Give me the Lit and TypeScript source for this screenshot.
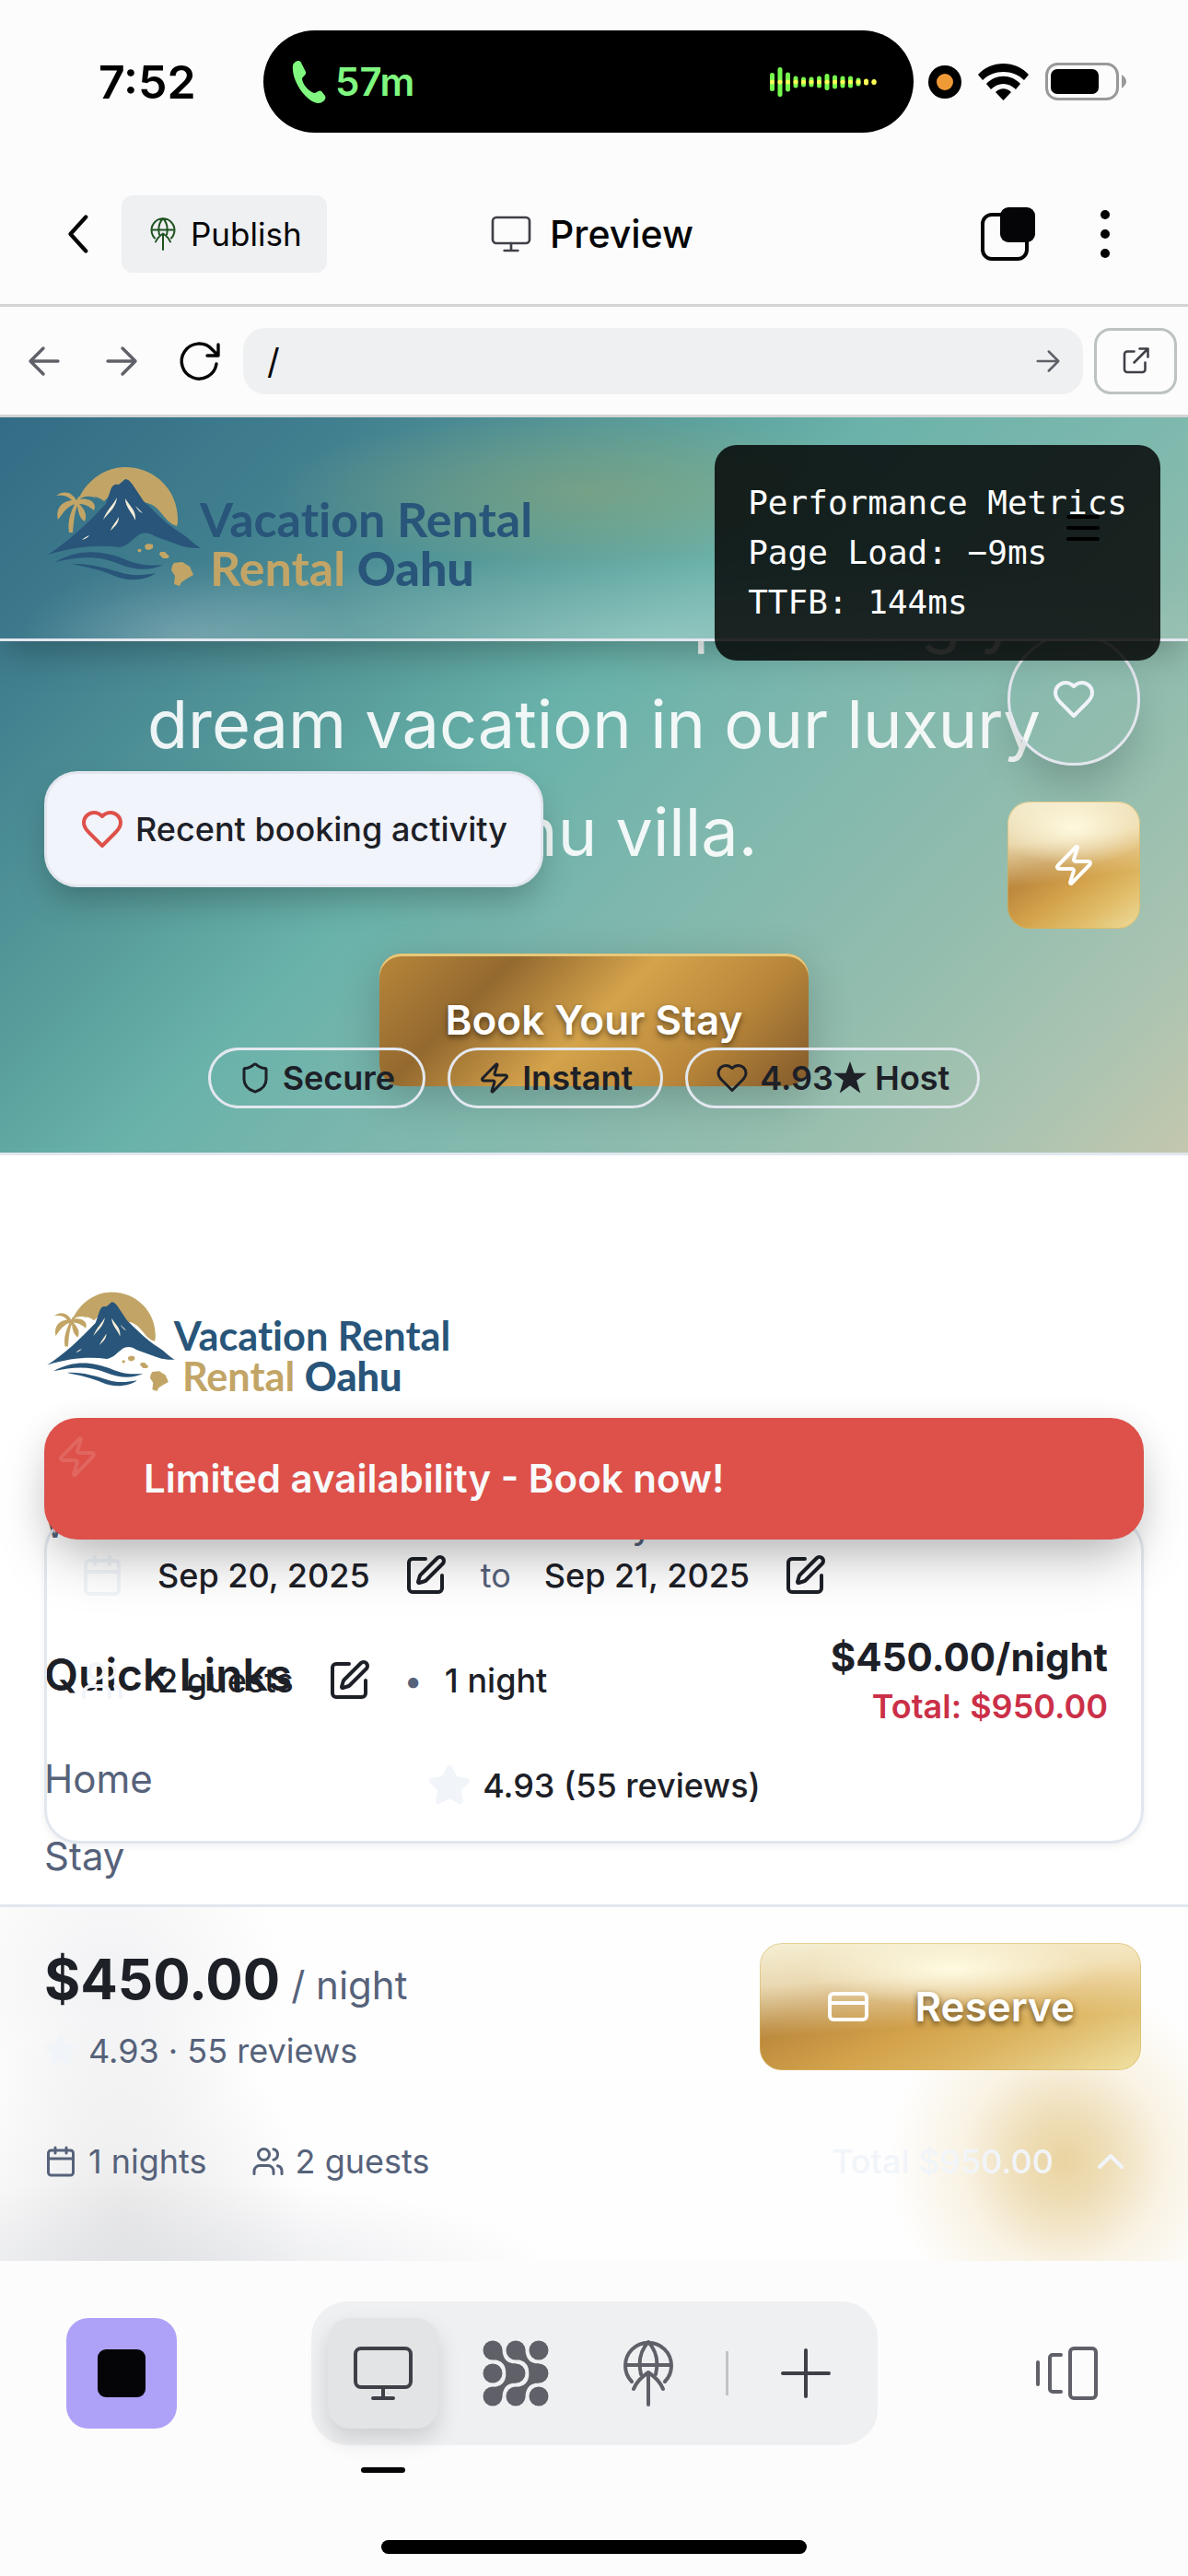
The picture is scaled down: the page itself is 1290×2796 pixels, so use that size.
import { LitElement, html, css, svg } from "lit";
import { customElement, property } from "lit/decorators.js";

const heart = svg`<path d="M19 14c1.49-1.46 3-3.21 3-5.5A5.5 5.5 0 0 0 16.5 3c-1.76 0-3 .5-4.5 2-1.5-1.5-2.740-2-4.500-2A5.500 5.500 0 0 0 2 8.500c0 2.300 1.500 4.050 3 5.500l7 7Z"/>`;
const bolt = svg`<path d="M4 14a1 1 0 0 1-.78-1.630l9.900-10.200a.5.5 0 0 1 .86.46l-1.920 6.020A1 1 0 0 0 13 10h7a1 1 0 0 1 .78 1.630l-9.900 10.200a.5.5 0 0 1-.86-.46l1.920-6.020A1 1 0 0 0 11 14z"/>`;
const shield = svg`<path d="M20 13c0 5-3.500 7.500-7.660 8.950a1 1 0 0 1-.67-.01C7.500 20.500 4 18 4 13V6a1 1 0 0 1 1-1c2 0 4.500-1.200 6.240-2.720a1.170 1.170 0 0 1 1.520 0C14.510 3.810 17 5 19 5a1 1 0 0 1 1 1z"/>`;
const calendar = svg`<path d="M8 2v4M16 2v4M3 10h18"/><rect x="3" y="4" width="18" height="18" rx="2"/>`;
const users = svg`<path d="M16 21v-2a4 4 0 0 0-4-4H6a4 4 0 0 0-4 4v2"/><circle cx="9" cy="7" r="4"/><path d="M22 21v-2a4 4 0 0 0-3-3.870M16 3.130a4 4 0 0 1 0 7.750"/>`;
const star = svg`<path fill="currentColor" d="M11.525 2.295a.53.53 0 0 1 .95 0l2.310 4.679a2.123 2.123 0 0 0 1.595 1.160l5.166.756a.53.53 0 0 1 .294.904l-3.736 3.638a2.123 2.123 0 0 0-.611 1.878l.882 5.140a.53.53 0 0 1-.771.560l-4.618-2.428a2.122 2.122 0 0 0-1.973 0L6.396 21.010a.53.53 0 0 1-.770-.560l.881-5.139a2.122 2.122 0 0 0-.611-1.879L2.160 9.795a.53.53 0 0 1 .294-.906l5.165-.755a2.122 2.122 0 0 0 1.597-1.160z"/>`;
const edit = svg`<path d="M12 3H5a2 2 0 0 0-2 2v14a2 2 0 0 0 2 2h14a2 2 0 0 0 2-2v-7"/><path d="M18.375 2.625a1 1 0 0 1 3 3l-9.013 9.014a2 2 0 0 1-.853.505l-2.873.840a.5.5 0 0 1-.620-.620l.840-2.873a2 2 0 0 1 .506-.852z"/>`;
const creditCard = svg`<rect x="2" y="5" width="20" height="14" rx="2"/><path d="M2 10h20"/>`;
const chevronUp = svg`<path d="m6 15 6-6 6 6"/>`;
const chevronLeft = svg`<path d="M15.700 4.600 9 12l6.700 7.400"/>`;
const menu = svg`<path d="M4 6h16M4 12h16M4 18h16"/>`;
const arrowLeft = svg`<path d="M19.500 12h-15M11.500 5l-7 7 7 7"/>`;
const arrowRight = svg`<path d="M4.500 12h15M12.500 5l7 7-7 7"/>`;
const reload = svg`<path d="M21.500 13.500a9.500 9.500 0 1 1-2.500-8l3 3M22.500 3v6h-6"/>`;
const external = svg`<path d="M11 5H6a2 2 0 0 0-2 2v11a2 2 0 0 0 2 2h11a2 2 0 0 0 2-2v-5M15 3h6v6M21 3 11 13"/>`;

const monitor = svg`<rect x="6" y="9" width="60" height="42" rx="6"/><path d="M36 51v11M25 63h22"/>`;
const globe = svg`<path d="M18 45A25 25 0 1 1 54 45M11 27h50M28 37Q23 16 36 2Q49 16 44 37M36 37v33M20 53Q24 43 36 35Q48 43 52 53"/>`;

const icon = (body: unknown, cls = "i48") => html`<svg class="icon ${cls}" viewBox="0 0 24 24" aria-hidden="true">${body}</svg>`;
const wide = (body: unknown, cls = "i48") => html`<svg class="icon ${cls}" viewBox="0 0 72 72" aria-hidden="true">${body}</svg>`;

const shared = css`
  * { box-sizing: border-box; margin: 0; padding: 0; }
  button { font: inherit; color: inherit; background: none; border: 0; display: flex; align-items: center; justify-content: center; cursor: pointer; }
  a { color: inherit; text-decoration: none; }
  svg { display: block; flex: none; }
  .icon { fill: none; stroke: currentColor; stroke-width: 2; stroke-linecap: round; stroke-linejoin: round; }
  .i36 { width: 36px; height: 36px; }
  .i48 { width: 48px; height: 48px; }
  .i60 { width: 60px; height: 60px; }
  .i72 { width: 72px; height: 72px; }
`;

@customElement("brand-logo")
class BrandLogo extends LitElement {
  @property({ reflect: true }) size = "large";
  static styles = css`
    :host { display: block; width: 532px; }
    :host([size="small"]) { width: 443px; }
    svg { display: block; width: 100%; height: auto; overflow: visible; }
    .gold { fill: #c2a566; }
    .blue { fill: #285579; }
    .snow { fill: #f4ecd9; }
    text { font: 700 52px Lato, "Open Sans", sans-serif; font-variant-ligatures: none; }
  `;
  render() {
    return html`<svg viewBox="8 3 532 150" role="img" aria-label="Vacation Rental Oahu">
      <path class="gold" d="M44 50C52 28 73 12 96 12c33 0 57 26 57 56 0 3 0 6-1 8-7-2-11-7-16-13-7-9-12-12-22-13L96 26 73 49c-6-5-14-7-28-5z"/>
      <path class="gold" d="M43 48c-4-8-13-12-22-5 7-1 13 0 17 5-10 1-18 8-15 21 5-6 8-13 18-17-4 9-8 18-6 31h4c1-12 2-22 5-29 1 8 3 14 8 17 3-7 0-13-6-19 7 0 11 3 16 7 4-8-5-14-16-12 4-3 11-5 19-1-6-6-18-6-22 2z"/>
      <path class="blue" d="M12 107C34 93 54 74 75 52l5-15c2-5 4-7 9-6l7-6c3 0 5 2 8 6l12 18c12 11 23 24 41 35 8 5 14 12 21 16-11 0-18-1-25-4l-25-9c-5-4-13-5-18-1-7 5-12 12-20 13-25-3-48-1-78 8z"/>
      <path class="snow" d="M87 45c-1 10-7 15-15 24 5-12 11-16 15-24zM96 46c5 9 12 12 11 24-4-10-11-14-11-24zM89 66c0 7-4 10-9 15 2-6 6-9 9-15zM107 54l8 8c-3-1-6-4-8-8zM57 86c-2 3-5 4-8 5 2-2 5-4 8-5z"/>
      <path class="blue" d="M20 115c28-16 53-11 73-4 14 6 25 9 44 7-14 7-31 6-48-1-22-9-42-8-69-2zM38 117c20-1 38 5 52 9 12 4 23 4 39 1-12 9-32 9-45 3-16-7-28-9-46-13z"/>
      <path class="gold" d="M117 97l4-2 5 1v4l-4 2-4-1zM110 101a2 2 0 1 0 3 0zM134 104l5 0 5 5-2 2-5 0-4-4zM149 116l9-1 8 5 4 9-7 4-6 4-2 4-6-2 1-9-4-6 1-5z"/>
      <text class="blue" x="177" y="88">Vacation Rental</text>
      <text class="gold" x="188" y="141">Rental <tspan class="blue" font-weight="900">Oahu</tspan></text>
    </svg>`;
  }
}

@customElement("device-status")
class DeviceStatus extends LitElement {
  static styles = [shared, css`
    :host { display: grid; grid-template-columns: 286px 1fr 298px; align-items: center; padding: 33px 0 34px; }
    .time { padding-left: 107px; font: 600 50px/60px Inter, sans-serif; color: #000; }
    .island { height: 111px; border-radius: 56px; background: #000; display: flex; align-items: center; padding: 0 38px 0 28px; gap: 2px; color: #80f880; font: 600 42px/48px Inter, sans-serif; }
    .wave { margin-left: auto; }
    .right { display: flex; align-items: center; gap: 18px; padding-left: 16px; }
  `];
  render() {
    const bars = [20, 32, 21, 13, 11, 11, 13, 18, 15, 13, 13, 9, 7, 6];
    return html`
      <div class="time">7:52</div>
      <div class="island">
        <svg class="i48" viewBox="0 0 48 48"><path fill="currentColor" d="M4 6c1-4 7-7 9-3l5 10c1 3-3 5-4 7 0 6 7 14 13 16 3 0 5-4 8-2l4 5c2 4-3 8-7 8C20 47 2 24 4 6z"/></svg>
        <span>57m</span>
        <svg class="wave" width="118" height="36" viewBox="0 0 118 36">
          ${bars.map((h, i) => svg`<rect x=${i * 8.5} y=${18 - h / 2} width="5" height=${h} rx="2.5" fill=${i > 11 ? "#fdfd55" : "#76fb4c"}/><circle cx=${i * 8.5 + 2.5} cy="18" r="2.5" fill="#fdfd55"/>`)}
        </svg>
      </div>
      <div class="right">
        <svg width="36" height="36" viewBox="0 0 36 36"><circle cx="18" cy="18" r="18"/><circle cx="18" cy="18" r="9" fill="#f09a37"/></svg>
        <svg width="55" height="40" viewBox="0 0 55 40"><path d="M0 12C14-4 41-4 55 12l-5 6C38 6 17 6 5 18zM9 22c10-11 27-11 37 0l-5 6c-8-8-19-8-27 0zM19 31c5-5 12-5 17 0l-8.500 9z"/></svg>
        <svg width="88" height="42" viewBox="0 0 88 42"><rect x="1.500" y="1.500" width="77" height="38" rx="12" fill="none" stroke="#999" stroke-width="3"/><rect x="6" y="7" width="52" height="27" rx="7"/><path fill="#999" d="M83 13q10 7 0 15z"/></svg>
      </div>`;
  }
}

@customElement("editor-bar")
class EditorBar extends LitElement {
  static styles = [shared, css`
    :host { display: block; font-family: Inter, sans-serif; color: #050507; }
    .nav { display: grid; grid-template-columns: 1fr auto 1fr; align-items: center; padding: 34px 60px 34px 54px; border-bottom: 3px solid #d4d4d4; }
    .left, .right, .title { display: flex; align-items: center; gap: 18px; }
    .right { justify-content: flex-end; gap: 46px; }
    .back, .more { width: 60px; height: 60px; }
    .back .icon { stroke-width: 1.7; }
    .publish { height: 84px; padding: 0 27px; gap: 12px; border-radius: 12px; background: #eff0f2; font-size: 35px; }
    .publish .icon { color: #1f5320; stroke-width: 4; }
    .title { font-size: 41px; font-weight: 500; }
    .title .icon { color: #3f4047; stroke-width: 4; }
    .url { display: flex; align-items: center; padding: 23px 12px 22px 24px; gap: 12px; border-bottom: 3px solid #d4d4d4; }
    .steps { display: flex; gap: 36px; color: #5f6068; padding-right: 12px; }
    .url .icon { stroke-width: 1.7; }
    .steps .dark { color: #050507; }
    .field { flex: 1; display: flex; align-items: center; height: 72px; border-radius: 24px; background: #eff0f2; padding: 0 20px 0 26px; color: #5f6068; }
    input { flex: 1; min-width: 0; border: 0; background: none; font: 400 38px Inter, sans-serif; color: #050507; outline: 0; }
    .open { width: 90px; height: 72px; border: 3px solid #bdc3c2; border-radius: 18px; color: #3f4047; }
  `];
  render() {
    return html`
      <nav class="nav">
        <div class="left">
          <button class="back" aria-label="Back">${icon(chevronLeft, "i60")}</button>
          <button class="publish">${wide(globe, "i36")}Publish</button>
        </div>
        <div class="title">${wide(monitor)}<span>Preview</span></div>
        <div class="right">
          <button aria-label="Switch window"><svg class="i60" viewBox="0 0 60 60"><rect x="3" y="9" width="48" height="48" rx="10" fill="none" stroke="currentColor" stroke-width="4"/><rect x="22" y="1" width="38" height="38" rx="9" fill="currentColor"/></svg></button>
          <button class="more" aria-label="More"><svg class="i60" viewBox="0 0 60 60"><circle cx="30" cy="9" r="5"/><circle cx="30" cy="30" r="5"/><circle cx="30" cy="51" r="5"/></svg></button>
        </div>
      </nav>
      <div class="url">
        <div class="steps">
          <button aria-label="Previous page">${icon(arrowLeft, "i48")}</button>
          <button aria-label="Next page">${icon(arrowRight, "i48")}</button>
          <button class="dark" aria-label="Reload">${icon(reload, "i48")}</button>
        </div>
        <div class="field"><input aria-label="Address" value="/" /><button aria-label="Go">${icon(arrowRight, "i36")}</button></div>
        <button class="open" aria-label="Open in new tab">${icon(external, "i36")}</button>
      </div>`;
  }
}

@customElement("rental-hero")
class RentalHero extends LitElement {
  static styles = [shared, css`
    :host { display: block; position: relative; border-bottom: 3px solid #e1e7ee; font-family: Inter, sans-serif; background: linear-gradient(135deg, #336c86 0%, #41808f 15%, #5a9f9c 34%, #69b2aa 44%, #7eb7ad 58%, #93bdae 76%, #abc4b1 90%, #c4c7ae 100%); }
    .body { display: flex; flex-direction: column; align-items: center; padding: 157px 48px 72px; gap: 74px; }
    .lead { font-size: 72px; line-height: 117px; font-weight: 400; color: rgba(255, 255, 255, .9); text-align: center; }
    .book { height: 144px; padding: 0 72px; border-radius: 24px; color: #fff; font-size: 44px; font-weight: 600; text-shadow: 0 3px 6px rgba(0, 0, 0, .5);
      background: linear-gradient(135deg, #b8863a 0%, #94692f 25%, #d4a34b 50%, #b8863a 75%, #81592b 100%);
      box-shadow: inset 0 3px 0 #e9c878, 0 12px 48px rgba(0, 0, 0, .2); }
    .chips { position: absolute; left: 0; right: 0; bottom: 48px; display: flex; justify-content: center; gap: 24px; list-style: none; }
    .chip { display: flex; align-items: center; gap: 12px; padding: 3px 30px; border: 3px solid #e3e8ef; border-radius: 33px; font-size: 36px; line-height: 54px; font-weight: 600; color: #1d2027; }
    .rating { display: flex; align-items: center; white-space: pre; }
    header { position: absolute; top: 0; left: 0; right: 0; height: 243px; display: flex; align-items: center; justify-content: space-between; padding: 0 48px; border-bottom: 3px solid #e3e6ee; box-shadow: 0 18px 36px -6px rgba(0, 0, 0, .25);
      background:
        radial-gradient(340px 85px at 640px 80px, rgba(145, 165, 115, .5), rgba(145, 165, 115, .3) 45%, transparent 100%),
        radial-gradient(700px 90px at 720px 240px, rgba(255, 255, 255, .24), rgba(255, 255, 255, .12) 50%, transparent),
        radial-gradient(180px 90px at 200px 245px, rgba(255, 255, 255, .2), transparent),
        linear-gradient(135deg, #336c86 0%, #41808f 25%, #5a9f9c 48%, #6bb2aa 62%, #7cb8ad 82%, #93bdae 100%); }
    .burger { width: 132px; height: 132px; color: #000; }
    .metrics { position: absolute; top: 30px; right: 30px; padding: 36px; border-radius: 24px; background: rgba(0, 0, 0, .82); color: #fff; font: 36px/54px "DejaVu Sans Mono", monospace; }
    .float { position: absolute; right: 52px; top: 234px; display: flex; flex-direction: column; gap: 39px; color: #fff; }
    .like { width: 144px; height: 144px; border: 3px solid #e3e6ee; border-radius: 50%; color: #f1f4fa; box-shadow: 0 30px 45px -9px rgba(0, 0, 0, .18); }
    .quick { width: 144px; height: 138px; border-radius: 24px; background:
        radial-gradient(60% 30% at 50% 20%, rgba(255, 251, 225, .95), transparent),
        linear-gradient(172deg, rgba(250, 247, 220, .9) 0%, rgba(250, 240, 205, .75) 30%, transparent 60%),
        linear-gradient(145deg, #a67930 0%, #bb873c 40%, #d3a24b 60%, #e0bb66 78%, #eedc9c 100%);
      box-shadow: inset 0 0 0 1px rgba(214, 180, 90, .6); }
    .toast { position: absolute; left: 48px; top: 384px; display: flex; align-items: center; gap: 12px; padding: 33px 36px; border: 3px solid #e3e6ee; border-radius: 36px; background: #f1f4fa; color: #1d2027; font-size: 36px; line-height: 54px; font-weight: 500; box-shadow: 0 18px 36px -6px rgba(0, 0, 0, .25); }
    .toast .icon { color: #dd514a; }
  `];
  render() {
    return html`
      <div class="body">
        <p class="lead">Book now and start planning your<br />dream vacation in our luxury<br />Oahu villa.</p>
        <button class="book">Book Your Stay</button>
      </div>
      <div class="float">
        <button class="like" aria-label="Save">${icon(heart)}</button>
        <button class="quick" aria-label="Instant booking">${icon(bolt)}</button>
      </div>
      <header><brand-logo></brand-logo><button class="burger" aria-label="Menu">${icon(menu, "i48")}</button></header>
      <div class="metrics"><p>Performance Metrics</p><p>Page Load: −9ms</p><p>TTFB: 144ms</p></div>
      <div class="toast" role="status">${icon(heart)}<span>Recent booking activity</span></div>
      <ul class="chips">
        <li class="chip">${icon(shield, "i36")}Secure</li>
        <li class="chip">${icon(bolt, "i36")}Instant</li>
        <li class="chip">${icon(heart, "i36")}<span class="rating">4.93<svg class="i36" viewBox="0 0 24 24"><path fill="currentColor" d="M12 0l3 8.500h9l-7.200 5.400L19.500 23 12 17.500 4.500 23l2.700-9.100L0 8.500h9z"/></svg> Host</span></li>
      </ul>`;
  }
}

@customElement("rental-footer")
class RentalFooter extends LitElement {
  static styles = [shared, css`
    :host { display: block; padding: 141px 48px 0; font: 400 42px/60px Inter, sans-serif; color: #56627a; }
    p { margin-top: 102px; line-height: 63px; white-space: nowrap; }
    h3 { margin-top: 100px; font-size: 48px; line-height: 66px; font-weight: 600; color: #1d2027; }
    ul { list-style: none; display: flex; flex-direction: column; gap: 24px; margin-top: 50px; }
  `];
  render() {
    return html`
      <brand-logo size="small"></brand-logo>
      <p>World-class vacations and luxury relaxation.</p>
      <h3>Quick Links</h3>
      <ul><li><a href="#home">Home</a></li><li><a href="#stay">Stay</a></li></ul>`;
  }
}

@customElement("booking-dock")
class BookingDock extends LitElement {
  static styles = [shared, css`
    :host { display: block; font-family: Inter, sans-serif; color: #1d2027; font-size: 36px; line-height: 48px; }
    .wrap { position: relative; padding: 0 48px 66px; }
    .card { display: flex; flex-direction: column; gap: 36px; padding: 36px; border: 3px solid #e1e7ee; border-radius: 36px; font-weight: 500; box-shadow: 0 3px 9px rgba(0, 0, 0, .06); }
    .row, .part, .nights { display: flex; align-items: center; }
    .row { justify-content: space-between; }
    .part { gap: 36px; }
    .nights { gap: 24px; }
    .pale { color: #f1f5fa; }
    .muted { color: #56627a; font-weight: 400; }
    .price { text-align: right; font-size: 42px; line-height: 57px; font-weight: 700; }
    .total { font-size: 36px; line-height: 51px; font-weight: 600; color: #cb3048; }
    .score { display: flex; justify-content: center; align-items: center; gap: 12px; }
    .alert { position: absolute; left: 48px; right: 48px; top: -108px; height: 132px; display: flex; align-items: center; gap: 48px; padding: 18px 12px; border-radius: 36px; background: #dd514a; color: #f8fafc; font-size: 42px; font-weight: 600; box-shadow: 0 30px 60px -12px rgba(0, 0, 0, .25), 0 6px 36px rgba(0, 0, 0, .08); }
    .alert .icon { align-self: flex-start; color: #e1665f; }
    .bar { border-top: 3px solid #e1e7ee; padding: 33px 48px 81px; display: flex; flex-direction: column; gap: 66px; color: #56627a; line-height: 54px;
      background:
        radial-gradient(190px 195px at 1155px 275px, rgba(226, 195, 126, .72) 0%, rgba(228, 200, 136, .6) 25%, rgba(240, 222, 180, .35) 58%, transparent 100%),
        radial-gradient(430px 110px at 180px 405px, rgba(214, 216, 222, .6), transparent),
        radial-gradient(200px 230px at 135px 340px, rgba(212, 212, 213, .5), transparent),
        radial-gradient(190px 180px at 120px 80px, rgba(232, 233, 236, .6), transparent),
        #fefefe; }
    .top { padding-right: 3px; }
    .sum { display: flex; flex-direction: column; gap: 6px; }
    .cost { display: flex; align-items: baseline; gap: 12px; font-size: 42px; line-height: 60px; }
    .cost strong { font-size: 60px; line-height: 90px; font-weight: 700; color: #1d2027; }
    .meta { display: flex; align-items: center; gap: 12px; }
    .group { display: flex; gap: 48px; }
    .reserve { height: 138px; padding: 0 72px; gap: 48px; border-radius: 24px; color: #fff; font-size: 44px; font-weight: 600; text-shadow: 0 3px 6px rgba(60, 40, 0, .75);
      background:
        radial-gradient(38% 30% at 50% 20%, rgba(255, 252, 228, .95), transparent),
        linear-gradient(176deg, rgba(252, 249, 225, .92) 0%, rgba(250, 240, 210, .78) 28%, transparent 62%),
        linear-gradient(155deg, #a98642 0%, #b8863a 28%, #d3a24b 52%, #dbb25d 68%, #e2c276 80%, #f0e2a4 100%);
      box-shadow: inset 0 0 0 1px rgba(214, 180, 90, .5); }
    .expand { gap: 38px; padding-right: 12px; color: #f1f5fa; font-weight: 500; }
  `];
  render() {
    const pen = (label: string) => html`<button aria-label=${label}>${icon(edit)}</button>`;
    return html`
      <div class="wrap">
        <div class="card">
          <div class="part">${icon(calendar, "i48 pale")}<span>Sep 20, 2025</span>${pen("Edit arrival")}<span class="muted">to</span><span>Sep 21, 2025</span>${pen("Edit departure")}</div>
          <div class="row">
            <div class="part">${icon(users, "i48 pale")}<span>2 guests</span>${pen("Edit guests")}<span class="nights"><span class="muted">•</span><span>1 night</span></span></div>
            <div class="price"><div>$450.00/night</div><div class="total">Total: $950.00</div></div>
          </div>
          <div class="score">${icon(star, "i48 pale")}<span>4.93 (55 reviews)</span></div>
        </div>
        <div class="alert" role="alert">${icon(bolt)}<span>Limited availability - Book now!</span></div>
      </div>
      <div class="bar">
        <div class="row top">
          <div class="sum">
            <div class="cost"><strong>$450.00</strong><span>/ night</span></div>
            <div class="meta">${icon(star, "i36 pale")}<span>4.93 · 55 reviews</span></div>
          </div>
          <button class="reserve">${icon(creditCard)}<span>Reserve</span></button>
        </div>
        <div class="row">
          <div class="group">
            <span class="meta">${icon(calendar, "i36")}1 nights</span>
            <span class="meta">${icon(users, "i36")}2 guests</span>
          </div>
          <button class="expand">Total $950.00${icon(chevronUp)}</button>
        </div>
      </div>`;
  }
}

@customElement("editor-dock")
class EditorDock extends LitElement {
  static styles = [shared, css`
    :host { display: flex; flex-direction: column; padding: 44px 72px 24px; color: #5f6068; gap: 103px; }
    .tools { display: grid; grid-template-columns: 1fr auto 1fr; align-items: center; }
    .icon { stroke-width: 4; }
    .stop, .tab { width: 120px; height: 120px; border-radius: 24px; }
    .stop { background: #aea1f8; }
    .square { width: 52px; height: 52px; border-radius: 9px; background: #050507; }
    .tabs { display: flex; align-items: center; gap: 24px; padding: 18px; border-radius: 39px; background: #eff0f2; }
    .tab { position: relative; }
    .on { background: #e3e4e6; color: #3f4047; box-shadow: 0 12px 24px rgba(0, 0, 0, .14); }
    .on::after { content: ""; position: absolute; left: 36px; right: 36px; bottom: -48px; height: 6px; border-radius: 3px; background: #050507; }
    .rule { width: 3px; height: 48px; background: #c2c3c6; }
    .plus { color: #3f4047; }
    .end { justify-self: end; }
    .home { align-self: center; width: 462px; height: 15px; border-radius: 8px; background: #000; }
  `];
  render() {
    const at = [11, 36, 61];
    return html`
      <div class="tools">
        <button class="stop" aria-label="Stop"><span class="square"></span></button>
        <div class="tabs">
          <button class="tab on" aria-label="Preview">${wide(monitor, "i72")}</button>
          <button class="tab" aria-label="Agent"><svg class="i72" viewBox="0 0 72 72" fill="currentColor">
            ${at.map((y) => at.map((x) => svg`<circle cx=${x} cy=${y} r="10.500"/>`))}
            <path d="M21 8C22 22 27 25 36 25.500L46 36 36 46.500C27 47 22 50 21 64L8 51C22 51 25 45 25.500 36 25 27 22 21 8 21zM46 8C47 22 52 25 61 25.500L71 36 61 46.500C52 47 47 50 46 64L33 51C47 51 50 45 50.500 36 50 27 47 21 33 21z"/></svg></button>
          <button class="tab" aria-label="Publish">${wide(globe, "i72")}</button>
          <span class="rule"></span>
          <button class="tab plus" aria-label="Add">${wide(svg`<path d="M36 11v50M11 36h50"/>`, "i72")}</button>
        </div>
        <button class="tab end" aria-label="Panels">${wide(svg`<rect x="40" y="9" width="28" height="54" rx="4"/><path d="M30 16h-9a3 3 0 0 0-3 3v34a3 3 0 0 0 3 3h9M5 24v24"/>`, "i72")}</button>
      </div>
      <div class="home"></div>`;
  }
}

@customElement("app-root")
class AppRoot extends LitElement {
  static styles = css`
    :host { display: flex; flex-direction: column; min-height: 100vh; background: #fcfcfc; }
    .view { flex: 1; position: relative; background: #fff; overflow: hidden; min-height: 1800px; }
    booking-dock { position: absolute; left: 0; right: 0; bottom: 0; }
  `;
  render() {
    return html`
      <device-status></device-status>
      <editor-bar></editor-bar>
      <main class="view">
        <rental-hero></rental-hero>
        <rental-footer></rental-footer>
        <booking-dock></booking-dock>
      </main>
      <editor-dock></editor-dock>`;
  }
}
